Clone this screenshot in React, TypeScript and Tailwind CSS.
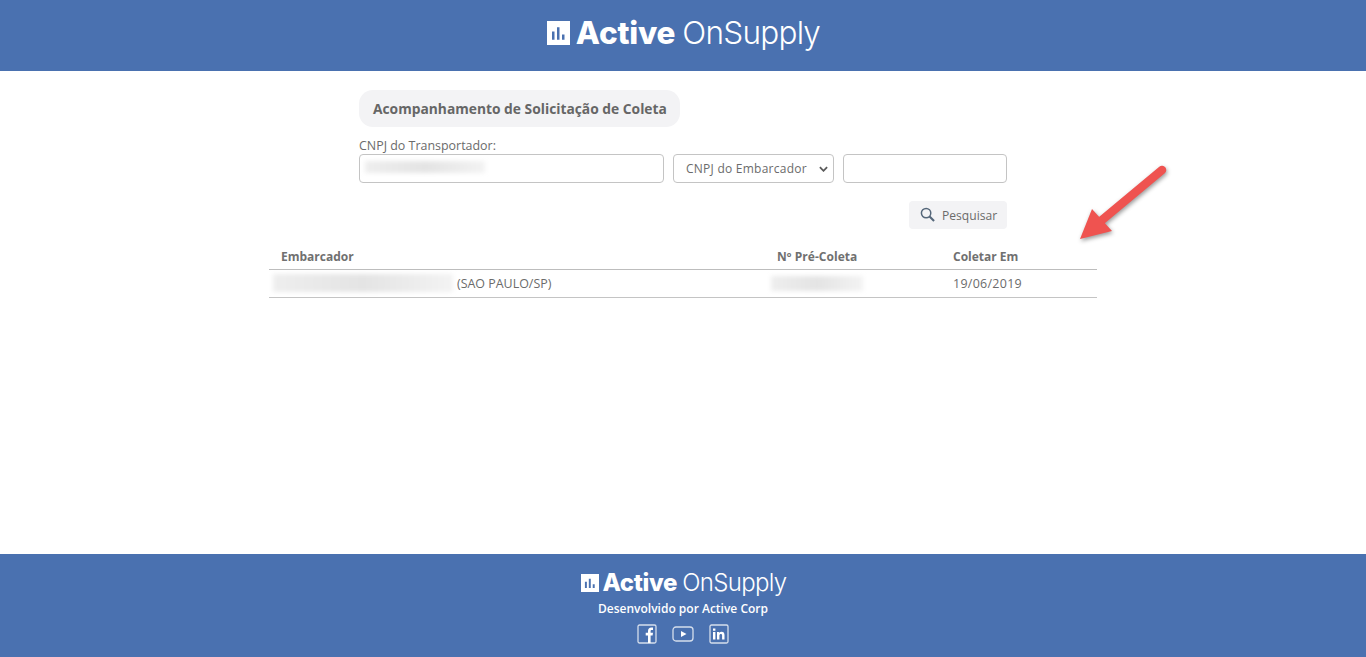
const font = { fontFamily: '"Open Sans", "Noto Sans", sans-serif' };

function Logo({ big }: { big?: boolean }) {
  const box = big ? 'w-[23px] h-[24px] mr-[6px]' : 'w-[18px] h-[18px] mr-[4px]';
  return (
    <div className={`flex items-center text-white [font-family:Inter,sans-serif] ${big ? 'pl-[1px]' : 'pl-[1px]'}`}>
      <svg viewBox="0 0 23 23" preserveAspectRatio="none" className={box}>
        <path fill="#fff" fillRule="evenodd" d="M0 0H23V23H0ZM5 10H7.500V18H5ZM10 6H12.500V18H10ZM15 13H17.500V18H15Z" />
      </svg>
      <span className={big ? 'text-[31.500px] font-extrabold tracking-[-0.2px] leading-none' : 'text-[24px] font-extrabold tracking-[-0.35px] leading-none'}>Active</span>
      <span className={big ? 'text-[31.500px] font-light tracking-[-0.75px] leading-none ml-[7px]' : 'text-[24px] font-light tracking-[-0.65px] leading-none ml-[5px]'}>OnSupply</span>
    </div>
  );
}

function Blur({ className }: { className: string }) {
  return <div className={`bg-gradient-to-r from-[#eeeeee] via-[#e4e4e4] to-[#f3f3f3] blur-[2px] ${className}`} />;
}

export default function App() {
  return (
    <div style={font} className="relative h-[657px] flex flex-col bg-white text-[#6b6b6b] overflow-hidden">
      <header className="h-[71px] bg-[#4a71b0] flex items-center justify-center shrink-0 pb-[6px]">
        <Logo big />
      </header>

      <main className="flex-1 flex flex-col items-center">
        <div className="w-[648px] pt-[19px]">
          <h1 className="w-[321px] h-[37px] rounded-[14px] bg-[#f3f3f5] flex items-center pl-[14px] pt-[2px] text-[13.800px] font-bold text-[#666666] whitespace-nowrap">
            Acompanhamento de Solicitação de Coleta
          </h1>
          <label className="block mt-[10px] text-[12.450px] leading-[17px] h-[17px]">CNPJ do Transportador:</label>
          <div className="flex gap-[9px]">
            <div className="w-[305px] h-[29px] rounded-[4px] border border-[#c4c4c4] flex items-center pl-[5px]">
              <Blur className="w-[120px] h-[12px] -mt-[3px]" />
            </div>
            <div className="w-[161px] h-[29px] rounded-[4px] border border-[#c4c4c4] flex items-center justify-between pl-[12px] pr-[5px] text-[12px] tracking-[0.25px]">
              <span>CNPJ do Embarcador</span>
              <svg viewBox="0 0 10 6" className="w-[9px] h-[6px]" fill="none" stroke="#5a5a5a" strokeWidth="2"><path d="M1 1l4 4 4-4" /></svg>
            </div>
            <div className="w-[164px] h-[29px] rounded-[4px] border border-[#c4c4c4]" />
          </div>
          <div className="flex justify-end mt-[18px]">
            <button className="w-[98px] h-[28px] rounded-[4px] bg-[#f3f3f5] flex items-center pl-[11px] gap-[7px] text-[12.100px] pt-[2px]">
              <svg viewBox="0 0 16 16" className="w-[15px] h-[15px] -mt-[3px]" fill="none" stroke="#55677a" strokeWidth="1.600">
                <circle cx="6.500" cy="6.500" r="5" />
                <path d="M10.200 10.200L15 15" strokeWidth="2.200" />
              </svg>
              Pesquisar
            </button>
          </div>
        </div>

        <table className="w-[828px] mt-[14px] table-fixed text-[12.450px] border-collapse">
          <thead>
            <tr className="h-[26px] border-b border-[#bdbdbd] text-left text-[12px] text-[#707070]">
              <th className="w-[496px] pl-[12px] pt-[2px] font-bold">Embarcador</th>
              <th className="w-[176px] pl-[12px] pt-[2px] font-bold tracking-[0.05px]">Nº Pré-Coleta</th>
              <th className="pl-[12px] pt-[2px] font-bold">Coletar Em</th>
            </tr>
          </thead>
          <tbody>
            <tr className="h-[28px] border-b border-[#c4c4c4]">
              <td className="pl-[4px]">
                <div className="flex items-center gap-[4px]">
                  <Blur className="w-[180px] h-[18px]" />
                  <span className="pt-[2px]">(SAO PAULO/SP)</span>
                </div>
              </td>
              <td className="pl-[6px]">
                <Blur className="w-[92px] h-[15px]" />
              </td>
              <td className="pl-[12px] pt-[2px] tracking-[0.3px]">19/06/2019</td>
            </tr>
          </tbody>
        </table>
      </main>

      <footer className="h-[103px] bg-[#4a71b0] flex flex-col items-center shrink-0 text-white pt-[17px]">
        <Logo />
        <p className="text-[12px] font-semibold leading-[17px] mt-[5px]">Desenvolvido por Active Corp</p>
        <div className="flex items-center gap-[15px] mt-[7px]">
          <svg viewBox="0 0 20 20" className="w-[20px] h-[20px]" fill="none">
            <rect x="1" y="1" width="18" height="18" rx="1.500" stroke="#d5deec" strokeWidth="1.300" />
            <path fill="#fff" d="M11 19V11.500H8.700V8.800H11V7c0-2.300 1.300-3.500 3.300-3.500H16v2.600h-1.200c-.9 0-1.200.4-1.200 1.200v1.500h2.400l-.4 2.700h-2V19Z" />
          </svg>
          <svg viewBox="0 0 22 18" className="w-[22px] h-[18px]" fill="none">
            <rect x="1" y="2" width="20" height="14" rx="3" stroke="#d5deec" strokeWidth="1.300" />
            <path fill="#fff" d="M9 6l5.500 3L9 12Z" />
          </svg>
          <svg viewBox="0 0 20 20" className="w-[20px] h-[20px]" fill="none">
            <rect x="1" y="1" width="18" height="18" rx="1.500" stroke="#d5deec" strokeWidth="1.300" />
            <path fill="#fff" d="M4 8h2.400v7.500H4ZM4 4.500h2.400v2.200H4ZM8 8h2.300v1c.5-.8 1.300-1.200 2.300-1.200 2 0 2.900 1.200 2.900 3.300v4.400h-2.400v-4c0-1-.4-1.600-1.200-1.600-.9 0-1.500.6-1.500 1.700v3.900H8Z" />
          </svg>
        </div>
      </footer>

      <svg className="absolute left-[1070px] top-[158px] w-[110px] h-[90px] pointer-events-none drop-shadow-[1px_2px_2px_rgba(0,0,0,0.4)]" viewBox="0 0 110 90">
        <path d="M92 12L32 62" stroke="#ef5350" strokeWidth="8.500" strokeLinecap="round" fill="none" />
        <path d="M10 81L22 51 42 73Z" fill="#ef5350" />
      </svg>
    </div>
  );
}
